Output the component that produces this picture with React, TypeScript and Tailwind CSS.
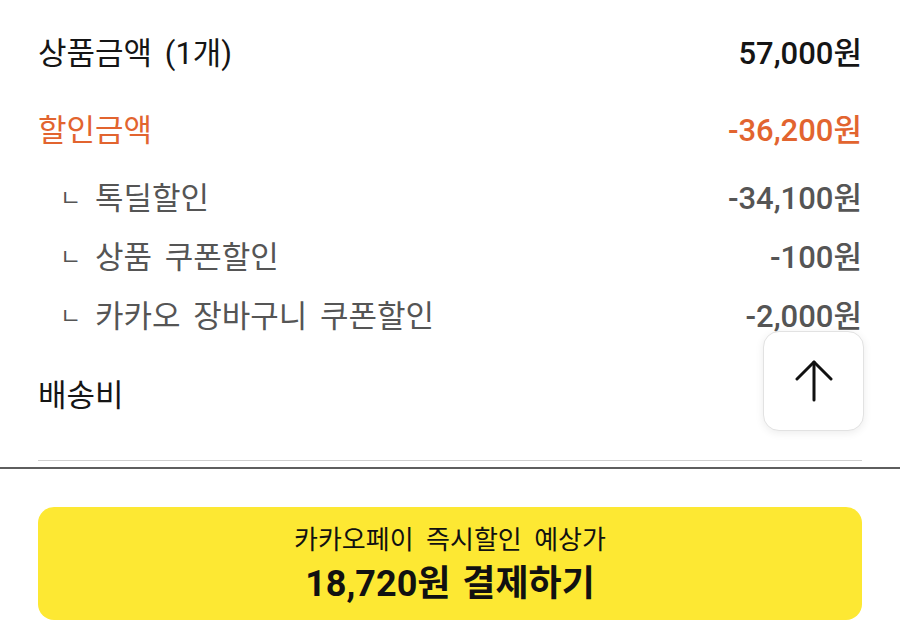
import React from "react";

const FONT = "font-['Roboto','Noto_Sans_CJK_KR',sans-serif]";

function SubRow({ label, value }: { label: string; value: string }) {
  return (
    <div className="flex h-[59px] items-center justify-between text-[#555]">
      <div className="flex items-center">
        <span className="w-[57px] pl-[22px] text-[23px]">ㄴ</span>
        <span className="text-[31px] [word-spacing:5px]">{label}</span>
      </div>
      <span className="text-[31px] font-medium">{value}</span>
    </div>
  );
}

export default function App() {
  return (
    <div className={`relative h-[633px] w-[900px] overflow-hidden bg-white ${FONT}`}>
      <div className="px-[38px] pt-[16px]">
        {/* 상품금액 */}
        <div className="flex h-[76px] items-center justify-between text-[#151515]">
          <span className="text-[31px] [word-spacing:5px]">상품금액 (1개)</span>
          <span className="text-[31px] font-medium">57,000원</span>
        </div>

        {/* 할인금액 */}
        <div className="flex h-[78px] items-center justify-between text-[#e2642f]">
          <span className="text-[31px]">할인금액</span>
          <span className="text-[31px] font-medium">-36,200원</span>
        </div>

        <SubRow label="톡딜할인" value="-34,100원" />
        <SubRow label="상품 쿠폰할인" value="-100원" />
        <SubRow label="카카오 장바구니 쿠폰할인" value="-2,000원" />

        {/* 배송비 */}
        <div className="flex h-[94px] items-center pt-[4px] text-[#151515]">
          <span className="text-[31px]">배송비</span>
        </div>

        <div className="mt-[19px] h-px bg-[#cfcfcf]" />
      </div>

      {/* bottom bar */}
      <div className="mt-[6px] border-t-2 border-[#5e5e5e] px-[38px] pt-[38px]">
        <button className="flex h-[113px] w-full flex-col items-center justify-center rounded-[16px] bg-[#fde833] text-[#111]">
          <span className="text-[26px] leading-[32px] [word-spacing:6px]">카카오페이 즉시할인 예상가</span>
          <span className="mt-[8px] text-[36px] font-bold leading-[40px] [word-spacing:3px]">18,720원 결제하기</span>
        </button>
      </div>

      {/* scroll to top */}
      <button className="absolute left-[763px] top-[331px] flex h-[100px] w-[101px] items-center justify-center rounded-[16px] border border-[#e2e2e2] bg-white shadow-[0_2px_8px_rgba(0,0,0,0.08)]">
        <svg width="38" height="42" viewBox="0 0 38 42" fill="none" stroke="#111" strokeWidth="3" strokeLinecap="round" strokeLinejoin="round">
          <path d="M19 2V40" />
          <path d="M2 19L19 2L36 19" />
        </svg>
      </button>
    </div>
  );
}
